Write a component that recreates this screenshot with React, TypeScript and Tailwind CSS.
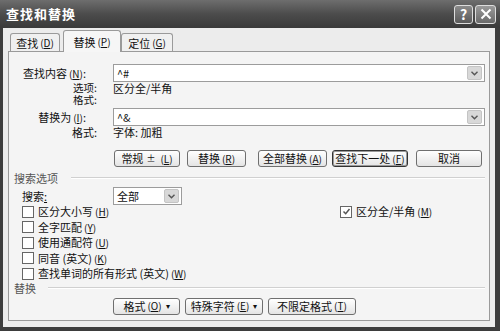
import React from "react";

const font = { fontFamily: '"Noto Sans CJK SC", "Noto Sans", sans-serif' };

function Key({ k }: { k: string }) {
  return (
    <span className="ml-[2px] text-[10px]">
      (<span className="underline">{k}</span>)
    </span>
  );
}

function Btn({ children, w, strong }: { children: React.ReactNode; w: string; strong?: boolean }) {
  return (
    <div
      className={`${w} h-[17px] flex items-center justify-center rounded-[3px] border bg-gradient-to-b from-white to-[#e4e4e4] text-[11px] leading-none text-[#111] ${
        strong ? "border-[#333] shadow-[inset_0_0_0_1px_#9a9a9a]" : "border-[#6f6f6f]"
      }`}
    >
      {children}
    </div>
  );
}

function Arrow() {
  return (
    <div className="w-[15px] h-[14px] mr-[2px] flex items-center justify-center rounded-[2px] bg-[#d8d8d8] border border-[#c4c4c4]">
      <svg width="7" height="5" viewBox="0 0 7 5">
        <path d="M0.5 0.8 L3.5 3.8 L6.5 0.8" stroke="#555" strokeWidth="1.4" fill="none" />
      </svg>
    </div>
  );
}

function Combo({ value, w }: { value: string; w: string }) {
  return (
    <div className={`${w} h-[18px] flex items-center justify-between border border-[#9c9c9c] bg-white`}>
      <span className="pl-[3px] text-[11px] leading-none text-[#111]">{value}</span>
      <Arrow />
    </div>
  );
}

function Check({ label, checked }: { label: React.ReactNode; checked?: boolean }) {
  return (
    <div className="flex items-center h-[15.5px] text-[11px] leading-[12px] text-[#111]">
      <div className="w-[12px] h-[12px] border border-[#666] bg-white flex items-center justify-center mr-[4px]">
        {checked && (
          <svg width="9" height="9" viewBox="0 0 9 9">
            <path d="M1.5 4.5 L3.7 6.7 L7.5 2" stroke="#555" strokeWidth="1.5" fill="none" />
          </svg>
        )}
      </div>
      <span>{label}</span>
    </div>
  );
}

export default function App() {
  return (
    <div style={font} className="w-[500px] h-[331px] bg-[#3d3d3d] flex flex-col pl-[3px] pr-[5px] pb-[4px] overflow-hidden">
      {/* Title bar */}
      <div className="h-[28px] shrink-0 -ml-[3px] -mr-[5px] flex items-center justify-between bg-gradient-to-b from-[#6e6e6e] via-[#4c4c4c] to-[#3a3a3a] px-[6px]">
        <span className="text-white font-bold text-[13px] tracking-[1px]">查找和替换</span>
        <div className="flex gap-[2px] mr-[-2px]">
          <div className="w-[19px] h-[19px] rounded-[3px] border border-[#ddd] bg-gradient-to-b from-[#8a8a8a] to-[#5a5a5a] flex items-center justify-center text-white font-bold text-[14px] leading-none">?</div>
          <div className="w-[21px] h-[19px] rounded-[3px] border border-[#ddd] bg-gradient-to-b from-[#9a9a9a] to-[#6a6a6a] flex items-center justify-center">
            <svg width="12" height="12" viewBox="0 0 12 12">
              <path d="M1.5 1.5 L10.5 10.5 M10.5 1.5 L1.5 10.5" stroke="white" strokeWidth="2" />
            </svg>
          </div>
        </div>
      </div>

      {/* Body */}
      <div className="flex-1 min-h-0 bg-[#ececec] flex flex-col px-[5px] pb-[6px]">
        {/* Tabs */}
        <div className="flex items-end h-[23px] shrink-0 pl-[2px] text-[11px] leading-[12px] text-[#111]">
          <div className="w-[50px] h-[19px] mb-[-1px] border border-[#9a9a9a] border-b-0 rounded-t-[3px] bg-[#f0f0f0] flex items-center justify-center">
            查找<Key k="D" />
          </div>
          <div className="w-[58px] h-[22px] mb-[-1px] ml-[3px] border border-[#9a9a9a] border-b-0 rounded-t-[3px] bg-[#f6f6f6] flex items-center justify-center relative z-10">
            替换<Key k="P" />
          </div>
          <div className="w-[52px] h-[19px] mb-[-1px] border border-[#9a9a9a] border-b-0 rounded-t-[3px] bg-[#f0f0f0] flex items-center justify-center">
            定位<Key k="G" />
          </div>
        </div>

        {/* Panel */}
        <div className="flex-1 min-h-0 border border-[#9a9a9a] bg-[#f4f4f4] flex flex-col pt-[12px] text-[11px] leading-[12px] text-[#111]">
          <div className="flex items-center h-[18px] shrink-0">
            <div className="w-[77px] text-right">查找内容<Key k="N" />:</div>
            <div className="w-[27px]" />
            <Combo value="^#" w="w-[372px]" />
          </div>
          <div className="flex shrink-0">
            <div className="w-[88px] text-right text-[10.5px] leading-[12px]">
              <div className="h-[12px]">选项:</div>
              <div className="h-[12px]">格式:</div>
            </div>
            <div className="w-[16px]" />
            <div className="leading-[12px]">区分全/半角</div>
          </div>
          <div className="flex items-center h-[18px] mt-[2px] shrink-0">
            <div className="w-[77px] text-right">替换为<Key k="I" />:</div>
            <div className="w-[27px]" />
            <Combo value="^&" w="w-[372px]" />
          </div>
          <div className="flex h-[11px] leading-[11px] mt-[1px] shrink-0">
            <div className="w-[88px] text-right">格式:</div>
            <div className="w-[16px]" />
            <div>字体: 加粗</div>
          </div>

          <div className="flex items-center mt-[12px] pl-[105px] shrink-0">
            <Btn w="w-[66px]">常规 <span className="mx-[3px] text-[9px]">±</span><Key k="L" /></Btn>
            <div className="w-[7px]" />
            <Btn w="w-[59px]">替换<Key k="R" /></Btn>
            <div className="w-[12px]" />
            <Btn w="w-[69px]">全部替换<Key k="A" /></Btn>
            <div className="w-[5px]" />
            <Btn w="w-[76px]" strong>查找下一处<Key k="F" /></Btn>
            <div className="w-[8px]" />
            <Btn w="w-[66px]">取消</Btn>
          </div>

          <div className="flex items-center h-[12px] mt-[5px] pl-[5px] pr-[4px] text-[#555] shrink-0">
            <span>搜索选项</span>
            <div className="flex-1 h-[2px] ml-[13px] border-t border-[#d0d0d0] border-b border-b-white" />
          </div>

          <div className="flex items-center mt-[3px] h-[18px] shrink-0">
            <div className="w-[13px]" />
            <span className="w-[91px]">
              搜索<span className="underline">:</span>
            </span>
            <Combo value="全部" w="w-[69px]" />
          </div>

          <div className="flex pl-[13px] mt-[-1px] shrink-0">
            <div className="flex flex-col w-[318px]">
              <Check label={<>区分大小写<Key k="H" /></>} />
              <Check label={<>全字匹配<Key k="Y" /></>} />
              <Check label={<>使用通配符<Key k="U" /></>} />
              <Check label={<>同音 (英文)<Key k="K" /></>} />
              <Check label={<>查找单词的所有形式 (英文)<Key k="W" /></>} />
            </div>
            <div>
              <Check checked label={<>区分全/半角<Key k="M" /></>} />
            </div>
          </div>

          <div className="flex items-center h-[12px] pl-[5px] pr-[4px] text-[#555] shrink-0">
            <span>替换</span>
            <div className="flex-1 h-[2px] ml-[12px] border-t border-[#d0d0d0] border-b border-b-white" />
          </div>

          <div className="flex items-center mt-[4px] pl-[104px] shrink-0">
            <Btn w="w-[67px]">格式<Key k="O" /><span className="ml-[4px] text-[8px]">▾</span></Btn>
            <div className="w-[5px]" />
            <Btn w="w-[78px]">特殊字符<Key k="E" /><span className="ml-[4px] text-[8px]">▾</span></Btn>
            <div className="w-[5px]" />
            <Btn w="w-[88px]">不限定格式<Key k="T" /></Btn>
          </div>
        </div>
      </div>
    </div>
  );
}
